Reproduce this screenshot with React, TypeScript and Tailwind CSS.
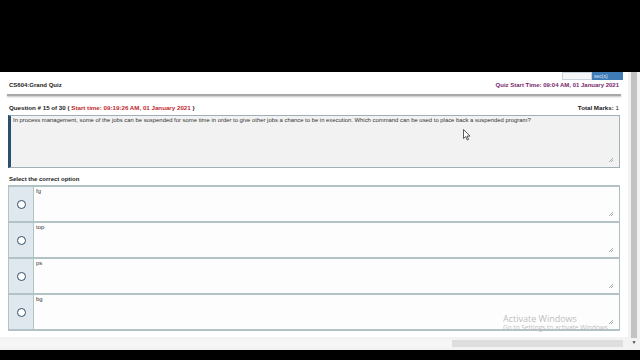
import { Fragment } from 'react';

const options = ['fg', 'top', 'ps', 'bg'];

function Grip() {
  return (
    <svg width="6" height="6" viewBox="0 0 6 6" className="absolute right-[5px] bottom-[4px]">
      <path d="M5 1 L1 5 M5 3 L3 5" stroke="#9a9a9a" strokeWidth="0.8" />
    </svg>
  );
}

export default function App() {
  return (
    <div className="w-[640px] h-[360px] bg-black flex flex-col overflow-hidden font-['Liberation_Sans',Arial,sans-serif]">
      <div className="h-[72px] shrink-0 bg-black" />

      <div className="h-[278px] shrink-0 flex bg-white relative overflow-hidden">
        {/* timer widget */}
        <div className="absolute left-[562px] top-0 h-[8px] w-[61px] flex text-[5px] leading-[8px]">
          <div className="w-[30px] bg-[#f4f6f8] border border-[#c9d3dc]" />
          <div className="flex-1 bg-[#3f7bb5] text-[#dfe8f3] pl-[2px]">sec(s)</div>
        </div>

        <div className="flex-1 flex flex-col">
          <div className="flex-1 flex flex-col px-[8px]">
            <div className="h-[18px] mt-[4px] flex items-center justify-between text-[6px] font-bold px-[1px]">
              <span className="text-[#1a1a1a]">CS604:Grand Quiz</span>
              <span className="text-[#7a1f6a]">Quiz Start Time: 09:04 AM, 01 January 2021</span>
            </div>
            <div className="h-[2px] bg-[#a9a9a9] shadow-[0_1px_2px_rgba(0,0,0,0.25)] mx-[-1px]" />

            <div className="mt-[7px] flex items-center justify-between text-[6.2px] font-bold px-[1px] h-[10px]">
              <span className="text-[#1a1a1a]">
                Question # 15 of 30 ( <span className="text-[#c0282d]">Start time: 09:19:26 AM, 01 January 2021</span> )
              </span>
              <span className="text-[#1a1a1a]">Total Marks: <span className="font-normal">1</span></span>
            </div>

            <div className="relative mt-[2px] h-[53px] shrink-0 bg-[#f2f2f2] border border-[#9fb0b6] border-l-[3px] border-l-[#28526b] px-[2px] pt-[1px] text-[5.9px] text-[#333] leading-[7px]">
              In process management, some of the jobs can be suspended for some time in order to give other jobs a chance to be in execution. Which command can be used to place back a suspended program?
              <Grip />
            </div>

            <div className="mt-[6px] h-[10px] flex items-center text-[6px] font-bold text-[#1a1a1a] px-[1px]">
              Select the correct option
            </div>

            <div className="mt-[1px] flex flex-col border-b-[2px] border-[#b3c2c5]">
              {options.map((o) => (
                <Fragment key={o}>
                  <div className="h-[36px] flex border-t-[2px] border-[#b3c2c5]">
                    <div className="w-[26px] bg-[#dfe7ef] border-x border-[#b3c2c5] flex items-center justify-center">
                      <div className="w-[9px] h-[9px] rounded-full border-[1.5px] border-[#2d4d6a] bg-white" />
                    </div>
                    <div className="relative flex-1 bg-[#fdfdfd] border-r border-[#aebfc2] px-[2px] pt-[1px] text-[5.9px] text-[#333] leading-[7px]">
                      {o}
                      <Grip />
                    </div>
                  </div>
                </Fragment>
              ))}
            </div>
          </div>

          {/* horizontal scrollbar */}
          <div className="h-[13px] shrink-0 bg-[#f3f3f3] flex items-start">
            <div className="w-[452px] h-[7px] mt-[3px] bg-[#f6f6f6]" />
            <div className="flex-1 h-[7px] mt-[3px] mr-[5px] bg-[#dedede]" />
          </div>
        </div>

        {/* vertical scrollbar */}
        <div className="w-[12px] shrink-0 bg-[#f2f2f2] flex flex-col items-center">
          <div className="w-[6px] h-[266px] bg-[#c3c3c3]" />
          <div className="mt-[2px] text-[5px] text-[#444] leading-none">▼</div>
        </div>

        {/* windows activation watermark */}
        <div className="absolute left-[503px] top-[242px] text-[#bdbdbd] font-['Open_Sans',sans-serif] leading-none pointer-events-none">
          <div className="text-[9px]">Activate Windows</div>
          <div className="text-[6.5px] mt-[2px]">Go to Settings to activate Windows.</div>
        </div>

        {/* mouse cursor */}
        <svg width="8" height="12" viewBox="0 0 8 12" className="absolute left-[463px] top-[57px]">
          <path d="M0.5 0.5 L0.5 9.5 L2.7 7.6 L4.3 11 L5.6 10.4 L4 7.1 L7 7.1 Z" fill="white" stroke="#333" strokeWidth="0.8" />
        </svg>
      </div>

      <div className="h-[10px] shrink-0 bg-black" />
    </div>
  );
}
